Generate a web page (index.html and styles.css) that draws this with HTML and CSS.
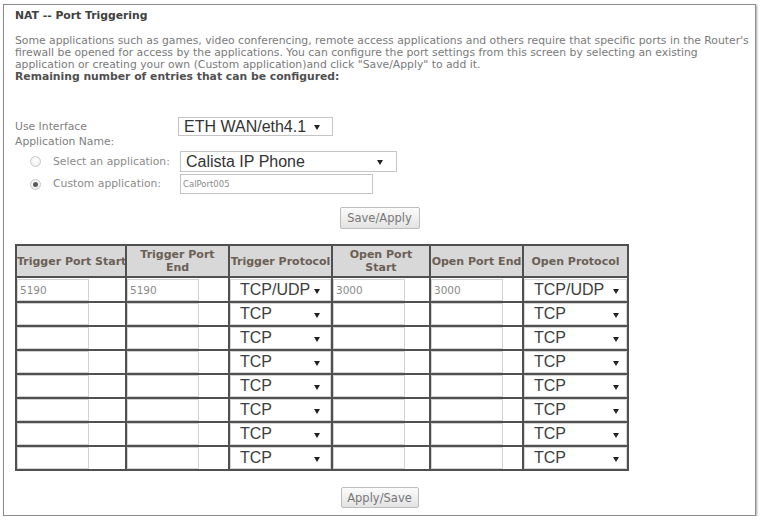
FILE: index.html
```html
<!DOCTYPE html>
<html lang="en">
<head>
<meta charset="utf-8">
<title>NAT -- Port Triggering</title>
<link rel="stylesheet" href="styles.css">
</head>
<body>
<div class="panel">
  <div class="title">NAT -- Port Triggering</div>
  <p class="intro">Some applications such as games, video conferencing, remote access applications and others require that specific ports in the Router's<br>firewall be opened for access by the applications. You can configure the port settings from this screen by selecting an existing<br>application or creating your own (Custom application)and click "Save/Apply" to add it.<br><b>Remaining number of entries that can be configured:</b></p>

  <div class="form">
    <div class="lbl row-if">Use Interface</div>
    <div class="sel sel-if row-if"><select><option>ETH WAN/eth4.1</option></select></div>
    <div class="lbl row-name">Application Name:</div>
    <label class="opt row-app"><span class="radio"></span>Select an application:</label>
    <div class="sel sel-app row-app"><select><option>Calista IP Phone</option></select></div>
    <label class="opt row-custom"><span class="radio on"></span>Custom application:</label>
    <input class="txt row-custom" type="text" value="CalPort005">
  </div>

  <div class="actions first"><button class="btn">Save/Apply</button></div>

  <table class="ports">
    <thead>
      <tr>
        <th class="c1">Trigger Port Start</th>
        <th class="c2">Trigger Port<br>End</th>
        <th class="c3">Trigger Protocol</th>
        <th class="c4">Open Port<br>Start</th>
        <th class="c5">Open Port End</th>
        <th class="c6">Open Protocol</th>
      </tr>
    </thead>
    <tbody>
      <tr>
        <td><input class="port" value="5190"></td>
        <td><input class="port" value="5190"></td>
        <td><div class="proto"><span>TCP/UDP</span></div></td>
        <td><input class="port" value="3000"></td>
        <td><input class="port" value="3000"></td>
        <td><div class="proto open"><span>TCP/UDP</span></div></td>
      </tr>
      <tr><td><input class="port"></td><td><input class="port"></td><td><div class="proto"><span>TCP</span></div></td><td><input class="port"></td><td><input class="port"></td><td><div class="proto open"><span>TCP</span></div></td></tr>
      <tr><td><input class="port"></td><td><input class="port"></td><td><div class="proto"><span>TCP</span></div></td><td><input class="port"></td><td><input class="port"></td><td><div class="proto open"><span>TCP</span></div></td></tr>
      <tr><td><input class="port"></td><td><input class="port"></td><td><div class="proto"><span>TCP</span></div></td><td><input class="port"></td><td><input class="port"></td><td><div class="proto open"><span>TCP</span></div></td></tr>
      <tr><td><input class="port"></td><td><input class="port"></td><td><div class="proto"><span>TCP</span></div></td><td><input class="port"></td><td><input class="port"></td><td><div class="proto open"><span>TCP</span></div></td></tr>
      <tr><td><input class="port"></td><td><input class="port"></td><td><div class="proto"><span>TCP</span></div></td><td><input class="port"></td><td><input class="port"></td><td><div class="proto open"><span>TCP</span></div></td></tr>
      <tr><td><input class="port"></td><td><input class="port"></td><td><div class="proto"><span>TCP</span></div></td><td><input class="port"></td><td><input class="port"></td><td><div class="proto open"><span>TCP</span></div></td></tr>
      <tr><td><input class="port"></td><td><input class="port"></td><td><div class="proto"><span>TCP</span></div></td><td><input class="port"></td><td><input class="port"></td><td><div class="proto open"><span>TCP</span></div></td></tr>
    </tbody>
  </table>

  <div class="actions last"><button class="btn">Apply/Save</button></div>
</div>
</body>
</html>
```

FILE: styles.css
```css
html, body {
  margin: 0;
  background: #fff;
}

body {
  font-family: "DejaVu Sans", Verdana, sans-serif;
  font-size: 10.8px;
  color: #777;
}

/* page frame */
.panel {
  box-sizing: border-box;
  width: 753px;
  height: 512px;
  margin: 4px 0 0 3px;
  padding: 4px 11px 0 11px;
  border: 1px solid #8c8c8c;
  box-shadow: 1px 1px 2px #a8a8a8;
}

.title {
  font-weight: bold;
  color: #404040;
  line-height: 13px;
}

.intro {
  margin: 13px 0 0;
  line-height: 12px;
  white-space: nowrap;
  color: #7a7a7a;
}

.intro b {
  color: #505050;
}

/* interface / application form */
.form {
  display: grid;
  grid-template-columns: 163px auto;
  justify-items: start;
  align-items: center;
  margin-top: 34px;
}

.lbl {
  line-height: 12px;
  color: #808080;
}

.row-if { grid-row: 1; }
.row-name { grid-row: 2; grid-column: 1 / 3; }
.row-app { grid-row: 3; margin-top: 3px; }
.row-custom { grid-row: 4; margin-top: 2px; }

.opt {
  display: flex;
  align-items: center;
  padding-left: 15px;
  line-height: 12px;
  color: #8a8a8a;
}

.radio {
  box-sizing: border-box;
  width: 11px;
  height: 11px;
  margin-right: 12px;
  border: 1px solid #c9c9c9;
  border-radius: 50%;
  background: radial-gradient(circle at 50% 40%, #fff 0, #e9e9e9 100%);
  position: relative;
}

.radio.on::after {
  content: "";
  position: absolute;
  left: 2px;
  top: 2px;
  width: 5px;
  height: 5px;
  border-radius: 50%;
  background: #5a5a5a;
}

/* drop-down boxes */
.sel {
  position: relative;
  box-sizing: border-box;
  border: 1px solid #c4c4c4;
  background: #fff;
}

.sel select {
  appearance: none;
  -webkit-appearance: none;
  display: block;
  width: 100%;
  height: 100%;
  margin: 0;
  padding: 0 0 0 5px;
  border: 0;
  background: transparent;
  font-family: "Liberation Sans", Arial, sans-serif;
  font-size: 16px;
  color: #333;
}

.sel::after {
  content: "";
  position: absolute;
  top: 50%;
  margin-top: -2px;
  width: 0;
  height: 0;
  border-left: 3px solid transparent;
  border-right: 3px solid transparent;
  border-top: 5px solid #222;
}

.sel-if {
  width: 155px;
  height: 19px;
}

.sel-if::after { right: 12px; }

.sel-app {
  width: 217px;
  height: 21px;
  margin-left: 2px;
}

.sel-app::after { right: 13px; }

.txt {
  box-sizing: border-box;
  width: 193px;
  height: 20px;
  margin: 2px 0 0 2px;
  padding: 0 2px;
  border: 1px solid #c4c4c4;
  font-family: "DejaVu Sans", Verdana, sans-serif;
  font-size: 8.5px;
  color: #8a8a8a;
  outline: none;
}

/* buttons */
.actions {
  display: flex;
  justify-content: center;
}

.actions.first { margin-top: 13px; }
.actions.last { margin-top: 16px; }

.btn {
  box-sizing: border-box;
  width: 80px;
  height: 22px;
  padding: 0;
  border: 1px solid #bdbdbd;
  border-radius: 2px;
  background: linear-gradient(#fbfbfb, #e3e3e3);
  font-family: "DejaVu Sans", Verdana, sans-serif;
  font-size: 11.5px;
  color: #777;
}

.actions.last .btn { width: 78px; height: 21px; }

/* port table */
.ports {
  margin-top: 15px;
  width: 614px;
  table-layout: fixed;
  border-collapse: separate;
  border-spacing: 0;
  border-top: 2px solid #505050;
  border-left: 2px solid #505050;
}

.ports th,
.ports td {
  padding: 0;
  border-right: 2px solid #505050;
  border-bottom: 2px solid #505050;
}

.ports th {
  height: 30px;
  background: #d8d8d8;
  font-weight: bold;
  font-size: 11px;
  line-height: 13px;
  color: #6b5f55;
  text-align: center;
  vertical-align: middle;
  white-space: nowrap;
  overflow: hidden;
}

.ports .c1 { width: 108px; }
.ports .c2 { width: 101px; }
.ports .c3 { width: 101px; }
.ports .c4 { width: 96px; }
.ports .c5 { width: 91px; }
.ports .c6 { width: 103px; }

.ports td {
  height: 22px;
  background: #fff;
}

.ports tbody tr:first-child td { height: 23px; }

.port {
  display: block;
  box-sizing: border-box;
  width: 72px;
  height: 22px;
  margin: 0;
  padding: 0 0 0 2px;
  border: 1px solid #d2d2d2;
  font-family: "DejaVu Sans", Verdana, sans-serif;
  font-size: 10.5px;
  color: #8a8a8a;
  outline: none;
}

.proto {
  position: relative;
  box-sizing: border-box;
  height: 22px;
  padding-left: 9px;
  border: 1px solid #d6d6d6;
  font-family: "Liberation Sans", Arial, sans-serif;
  font-size: 16px;
  line-height: 20px;
  color: #3d3d3d;
}

.proto::after {
  content: "";
  position: absolute;
  right: 10px;
  top: 9px;
  width: 0;
  height: 0;
  border-left: 3px solid transparent;
  border-right: 3px solid transparent;
  border-top: 5px solid #222;
}

.proto.open::after { right: 7px; }
```
